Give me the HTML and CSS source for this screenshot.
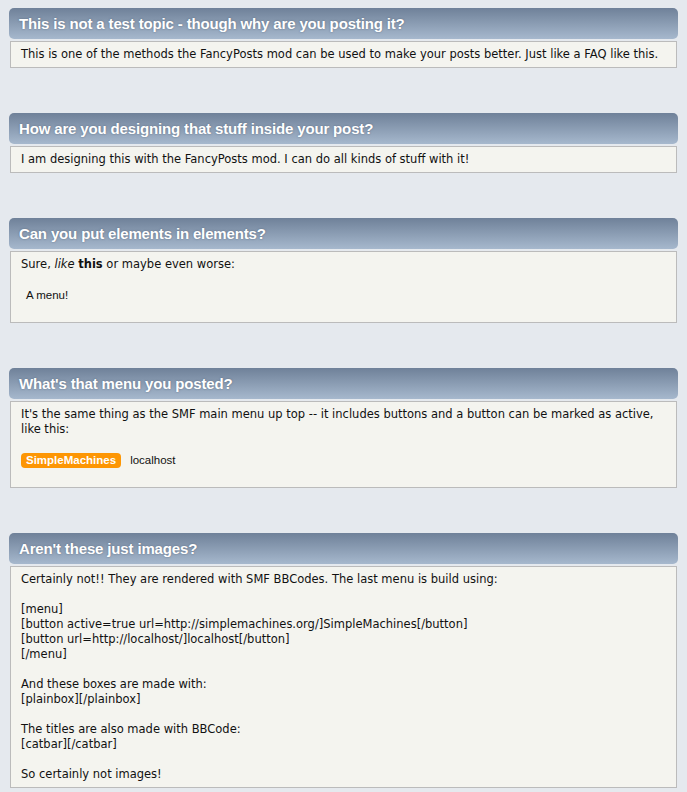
FILE: index.html
```html
<!DOCTYPE html>
<html lang="en">
<head>
    <meta charset="UTF-8">
    <title>FancyPosts FAQ</title>
    <link rel="stylesheet" href="styles.css">
</head>
<body>
    <div class="post">
        <!-- FAQ 1 -->
        <div class="faq">
            <h3 class="catbar">This is not a test topic - though why are you posting it?</h3>
            <div class="plainbox">
                <p>This is one of the methods the FancyPosts mod can be used to make your posts better. Just like a FAQ like this.</p>
            </div>
        </div>

        <!-- FAQ 2 -->
        <div class="faq">
            <h3 class="catbar">How are you designing that stuff inside your post?</h3>
            <div class="plainbox">
                <p>I am designing this with the FancyPosts mod. I can do all kinds of stuff with it!</p>
            </div>
        </div>

        <!-- FAQ 3 -->
        <div class="faq">
            <h3 class="catbar">Can you put elements in elements?</h3>
            <div class="plainbox">
                <p>Sure, <em>like</em> <strong>this</strong> or maybe even worse:</p>
                <ul class="menu">
                    <li>A menu!</li>
                </ul>
            </div>
        </div>

        <!-- FAQ 4 -->
        <div class="faq">
            <h3 class="catbar">What's that menu you posted?</h3>
            <div class="plainbox">
                <p>It's the same thing as the SMF main menu up top -- it includes buttons and a button can be marked as active, like this:</p>
                <ul class="menu">
                    <li><a href="#" class="active">SimpleMachines</a></li>
                    <li><a href="#">localhost</a></li>
                </ul>
            </div>
        </div>

        <!-- FAQ 5 -->
        <div class="faq">
            <h3 class="catbar">Aren't these just images?</h3>
            <div class="plainbox">
                <p>Certainly not!! They are rendered with SMF BBCodes. The last menu is build using:<br>
                <br>
                [menu]<br>
                [button active=true url=http://simplemachines.org/]SimpleMachines[/button]<br>
                [button url=http://localhost/]localhost[/button]<br>
                [/menu]<br>
                <br>
                And these boxes are made with:<br>
                [plainbox][/plainbox]<br>
                <br>
                The titles are also made with BBCode:<br>
                [catbar][/catbar]<br>
                <br>
                So certainly not images!</p>
            </div>
        </div>
    </div>
</body>
</html>
```

FILE: styles.css
```css
body {
    margin: 0;
    padding: 0;
    background-color: #e5e9ee;
    font-family: "DejaVu Sans", Verdana, sans-serif;
    color: #111;
}
.post {
    padding: 8px 9px;
}
.faq {
    margin-bottom: 45px;
}
.faq:last-child {
    margin-bottom: 0;
}
.catbar {
    margin: 0 0 2px 0;
    height: 31px;
    line-height: 31px;
    padding: 0 10px;
    border-radius: 5px;
    background: linear-gradient(to bottom, #6f8199, #a6b8cd);
    color: #fff;
    font-family: "Liberation Sans", Arial, sans-serif;
    font-size: 15px;
    font-weight: bold;
    letter-spacing: -0.15px;
    text-shadow: 0 0 2px rgba(60, 75, 95, 0.6);
}
.plainbox {
    margin: 0 1px;
    padding: 5px 10px;
    background-color: #f4f4ef;
    border: 1px solid #bbb;
}
.plainbox p {
    margin: 0;
    font-size: 11.5px;
    line-height: 15px;
}
.menu {
    list-style-type: none;
    margin: 16px 0 14px 0;
    padding: 0;
    display: flex;
    gap: 4px;
    height: 15px;
    font-family: "Liberation Sans", Arial, sans-serif;
    font-size: 11.5px;
    line-height: 15px;
}
.menu li {
    padding: 0 5px;
}
.menu li:has(a) {
    padding: 0;
}
.menu a {
    display: block;
    padding: 0 5px;
    color: #111;
    text-decoration: none;
    border-radius: 4px;
}
.menu a.active {
    background-color: #fd9604;
    color: #fff;
    font-weight: bold;
}
```
